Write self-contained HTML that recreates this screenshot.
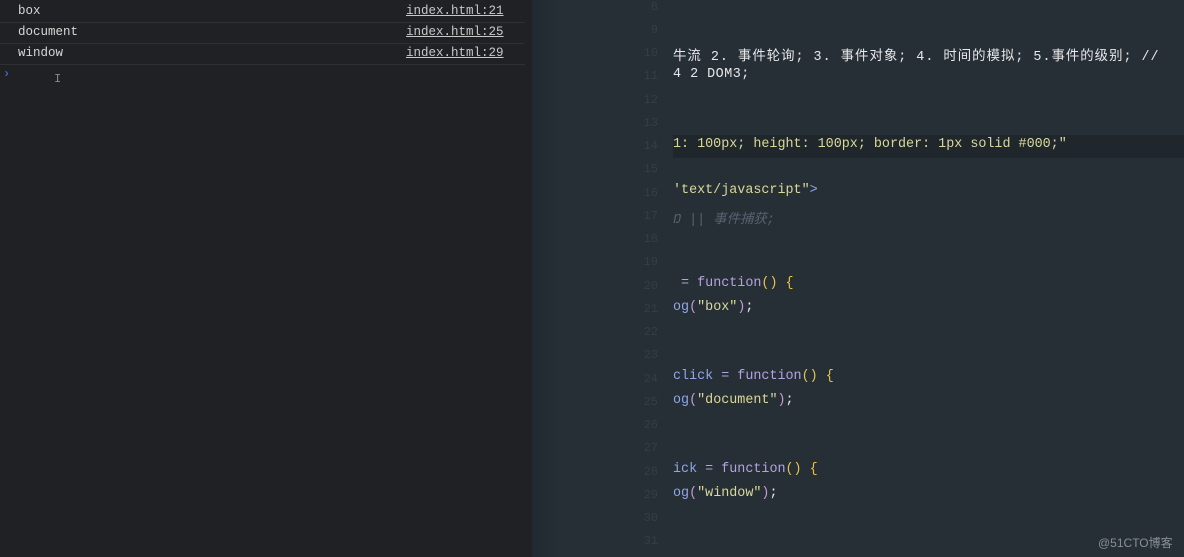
<!DOCTYPE html>
<html><head><meta charset="utf-8"><style>
body{margin:0;width:1184px;height:557px;overflow:hidden;background:#262e36;font-family:"Liberation Mono","Noto Sans CJK SC",monospace;position:relative}
#left{position:absolute;left:0;top:0;width:532px;height:557px;background:#202124}
.row{position:absolute;left:0;width:525px;height:21px;border-bottom:1px solid #2f3033;color:#d6d6d6;font-size:12.5px;line-height:21px}
.row .t{position:absolute;left:18px}
.row .l{position:absolute;left:406px;text-decoration:underline;color:#c8c8c8}
#strip{position:absolute;left:532px;top:0;width:30px;height:557px;background:linear-gradient(90deg,#222a31,#262e36)}
.ln{position:absolute;left:630px;width:28px;text-align:right;color:#343e48;font-size:12px}
.c{position:absolute;left:673px;font-size:13.4px;white-space:pre;color:#e8e8e8}
.hl{position:absolute;left:673px;top:135px;width:511px;height:23px;background:#1f262c}
.s{color:#d9d99a}.k{color:#b4a3e0}.y{color:#e8c34a}.p{color:#c89ad6}.b{color:#8fa6e8}.g{color:#566270;font-style:italic}
</style></head><body>
<div id="left">
<div class="row" style="top:1px"><span class="t">box</span><span class="l">index.html:21</span></div>
<div class="row" style="top:22px"><span class="t">document</span><span class="l">index.html:25</span></div>
<div class="row" style="top:43px"><span class="t">window</span><span class="l">index.html:29</span></div>
<div style="position:absolute;left:3px;top:67px;color:#4a7cf0;font-size:12px">›</div>
<div style="position:absolute;left:54px;top:72px;color:#888;font-size:12px">I</div>
</div>
<div id="strip"></div>
<div class="hl"></div>
<div class="ln" style="top:0">8</div><div class="ln" style="top:23px">9</div>
<div class="ln" style="top:46px">10</div><div class="ln" style="top:69px">11</div>
<div class="ln" style="top:93px">12</div><div class="ln" style="top:116px">13</div>
<div class="ln" style="top:139px">14</div><div class="ln" style="top:162px">15</div>
<div class="ln" style="top:186px">16</div><div class="ln" style="top:209px">17</div>
<div class="ln" style="top:232px">18</div><div class="ln" style="top:255px">19</div>
<div class="ln" style="top:279px">20</div><div class="ln" style="top:302px">21</div>
<div class="ln" style="top:325px">22</div><div class="ln" style="top:348px">23</div>
<div class="ln" style="top:372px">24</div><div class="ln" style="top:395px">25</div>
<div class="ln" style="top:418px">26</div><div class="ln" style="top:441px">27</div>
<div class="ln" style="top:465px">28</div><div class="ln" style="top:488px">29</div>
<div class="ln" style="top:511px">30</div><div class="ln" style="top:534px">31</div>
<div class="c" style="top:44px;letter-spacing:1px">牛流 2. 事件轮询; 3. 事件对象; 4. 时间的模拟; 5.事件的级别; //</div>
<div class="c" style="top:67px;letter-spacing:0.5px">4 2 DOM3;</div>
<div class="c s" style="top:137px">1: 100px; height: 100px; border: 1px solid #000;"</div>
<div class="c" style="top:183px"><span class="s">'text/javascript"</span><span class="b">&gt;</span></div>
<div class="c g" style="top:207px">Ŋ || 事件捕获;</div>
<div class="c" style="top:276px"> <span class="k">= function</span><span class="y">() {</span></div>
<div class="c" style="top:300px"><span class="b">og</span><span class="p">(</span><span class="s">"box"</span><span class="p">)</span>;</div>
<div class="c" style="top:369px"><span class="b">click</span> <span class="k">= function</span><span class="y">() {</span></div>
<div class="c" style="top:393px"><span class="b">og</span><span class="p">(</span><span class="s">"document"</span><span class="p">)</span>;</div>
<div class="c" style="top:462px"><span class="b">ick</span> <span class="k">= function</span><span class="y">() {</span></div>
<div class="c" style="top:486px"><span class="b">og</span><span class="p">(</span><span class="s">"window"</span><span class="p">)</span>;</div>
<div style="position:absolute;left:1098px;top:534px;font-family:'Liberation Sans','Noto Sans CJK SC',sans-serif;font-size:12px;color:#8a9096">@51CTO博客</div>
</body></html>
